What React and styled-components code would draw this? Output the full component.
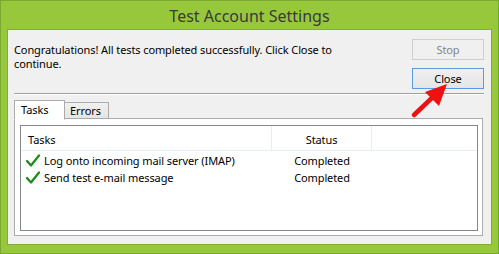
import React from "react";
import styled, { createGlobalStyle } from "styled-components";

const Global = createGlobalStyle`
  html, body { margin: 0; padding: 0; background: #ffffff; }
  body { font-family: "Noto Sans", "Open Sans", sans-serif; }
  * { box-sizing: border-box; }
`;

const Window = styled.div`
  position: relative;
  width: 499px;
  height: 254px;
  background: #97c83c;
  border: 1px solid #7aa931;
  display: flex;
  flex-direction: column;
`;

const TitleBar = styled.div`
  height: 28px;
  display: flex;
  align-items: center;
  justify-content: center;
  font-family: "Noto Sans", sans-serif;
  font-size: 16px;
  color: #3a3a3a;
  padding-top: 1px;
`;

const Client = styled.div`
  margin: 0 6px 8px 6px;
  flex: 1;
  border: 1px solid #82ad34;
  background: #f0f0f0;
  display: flex;
  flex-direction: column;
  padding: 0 7px 0 6px;
  font-size: 11px;
  letter-spacing: -0.1px;
`;

const TopRow = styled.div`
  display: flex;
  justify-content: space-between;
  padding-top: 9px;
`;

const Message = styled.div`
  line-height: 14px;
  color: #000;
  width: 340px;
  padding-top: 4px;
`;

const Buttons = styled.div`
  display: flex;
  flex-direction: column;
  gap: 8px;
`;

const Button = styled.div`
  width: 72px;
  height: 21px;
  display: flex;
  align-items: center;
  justify-content: center;
  color: ${(p) => (p.disabled ? "#838383" : "#000")};
  border: 1px solid ${(p) => (p.disabled ? "#cfcfcf" : p.focused ? "#569de5" : "#acacac")};
  background: ${(p) =>
    p.disabled ? "#f0f0f0" : "linear-gradient(#f0f0f0, #e5e5e5)"};
`;

const Separator = styled.div`
  margin-top: 4px;
  height: 1px;
  background: #a0a0a0;
  border-bottom: 1px solid #ffffff;
  box-sizing: content-box;
`;

const TabStrip = styled.div`
  display: flex;
  align-items: flex-end;
  margin-top: 4px;
  height: 20px;
  position: relative;
  z-index: 1;
`;

const Tab = styled.div`
  height: ${(p) => (p.active ? "20px" : "17px")};
  width: ${(p) => (p.active ? "51px" : "45px")};
  border: 1px solid #acacac;
  border-bottom: ${(p) => (p.active ? "1px solid #ffffff" : "1px solid #acacac")};
  background: ${(p) => (p.active ? "#ffffff" : "linear-gradient(#f0f0f0, #e5e5e5)")};
  color: #000;
  padding-left: ${(p) => (p.active ? "6px" : "5px")};
  padding-top: ${(p) => (p.active ? "2px" : "1px")};
  line-height: 14px;
  margin-left: ${(p) => (p.active ? "0" : "-1px")};
  margin-bottom: ${(p) => (p.active ? "-1px" : "0")};
`;

const Panel = styled.div`
  border: 1px solid #acacac;
  background: #ffffff;
  width: 469px;
  height: 118px;
  padding: 6px 4px 4px 5px;
  margin-top: -1px;
`;

const ListView = styled.div`
  border: 1px solid #828790;
  background: #ffffff;
  height: 100%;
  width: 100%;
`;

const HeaderRow = styled.div`
  display: grid;
  grid-template-columns: 251px 100px 1fr;
  height: 25px;
  border-bottom: 1px solid #e5ecf4;
`;

const HeaderCell = styled.div`
  color: #000;
  display: flex;
  align-items: center;
  padding-top: 2px;
  justify-content: ${(p) => (p.center ? "center" : "flex-start")};
  padding-left: ${(p) => (p.center ? "0" : "7px")};
  border-right: ${(p) => (p.last ? "none" : "1px solid #e5ecf4")};
`;

const Rows = styled.div`
  padding-top: 1px;
`;

const Row = styled.div`
  display: grid;
  grid-template-columns: 251px 100px 1fr;
  height: 17px;
  align-items: center;
  color: #000;
`;

const TaskCell = styled.div`
  display: flex;
  align-items: center;
  padding-left: 5px;
  gap: 4px;
`;

const StatusCell = styled.div`
  text-align: center;
`;

const ArrowWrap = styled.svg`
  position: absolute;
  left: 406px;
  top: 79px;
`;

const Check = () => (
  <svg width="14" height="13" viewBox="0 0 14 13">
    <path d="M1 7 L5 11.5 L13 1.5" fill="none" stroke="#1f8a1f" strokeWidth="2.3" strokeLinecap="round" strokeLinejoin="round" />
  </svg>
);

export default function App() {
  return (
    <>
      <Global />
      <Window>
        <TitleBar>Test Account Settings</TitleBar>
        <Client>
          <TopRow>
            <Message>
              Congratulations! All tests completed successfully. Click Close to continue.
            </Message>
            <Buttons>
              <Button disabled>Stop</Button>
              <Button focused>Close</Button>
            </Buttons>
          </TopRow>
          <Separator />
          <TabStrip>
            <Tab active>Tasks</Tab>
            <Tab>Errors</Tab>
          </TabStrip>
          <Panel>
            <ListView>
              <HeaderRow>
                <HeaderCell>Tasks</HeaderCell>
                <HeaderCell center>Status</HeaderCell>
                <HeaderCell last />
              </HeaderRow>
              <Rows>
                <Row>
                  <TaskCell>
                    <Check />
                    Log onto incoming mail server (IMAP)
                  </TaskCell>
                  <StatusCell>Completed</StatusCell>
                </Row>
                <Row>
                  <TaskCell>
                    <Check />
                    Send test e-mail message
                  </TaskCell>
                  <StatusCell>Completed</StatusCell>
                </Row>
              </Rows>
            </ListView>
          </Panel>
        </Client>
        <ArrowWrap width="44" height="40" viewBox="0 0 44 40">
          <path d="M7 35 L28 15" stroke="#ee1111" strokeWidth="4.5" strokeLinecap="round" />
          <polygon points="40,4 18,12 32,26" fill="#ee1111" />
        </ArrowWrap>
      </Window>
    </>
  );
}
